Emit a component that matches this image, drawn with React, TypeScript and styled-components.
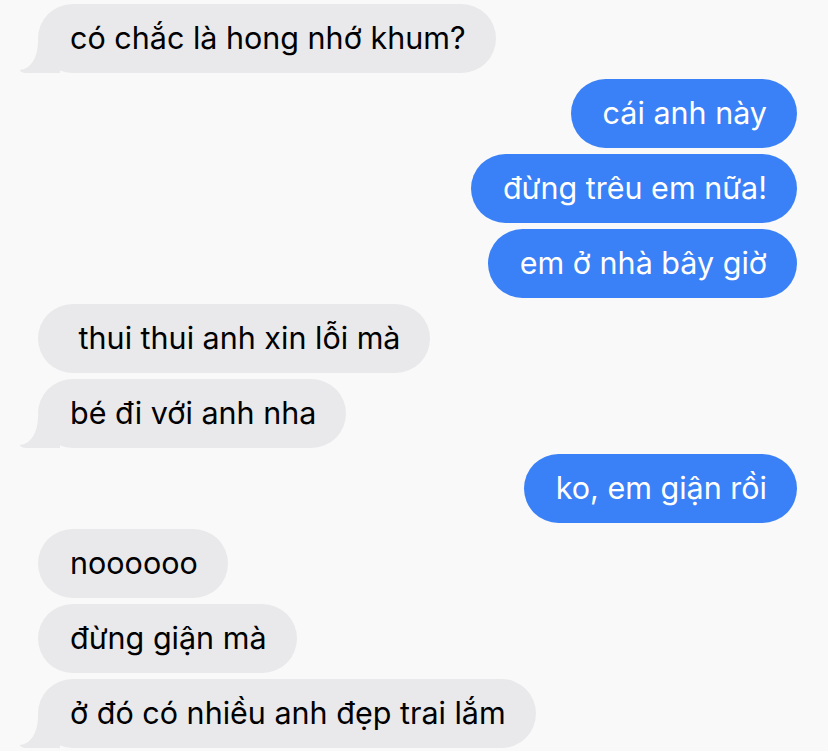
import styled, { createGlobalStyle } from 'styled-components'

const PAGE_BG = '#f9f9f9'
const GRAY = '#e9e9eb'
const BLUE = '#3a80f6'

interface Message {
  text: string
  mine: boolean
  tail?: boolean
}

const messages: Message[] = [
  { text: 'có chắc là hong nhớ khum?', mine: false, tail: true },
  { text: 'cái anh này', mine: true },
  { text: 'đừng trêu em nữa!', mine: true },
  { text: 'em ở nhà bây giờ', mine: true },
  { text: '\u00a0thui thui anh xin lỗi mà', mine: false },
  { text: 'bé đi với anh nha', mine: false, tail: true },
  { text: 'ko, em giận rồi', mine: true },
  { text: 'noooooo', mine: false },
  { text: 'đừng giận mà', mine: false },
  { text: 'ở đó có nhiều anh đẹp trai lắm', mine: false, tail: true },
]

export default function App() {
  return (
    <>
      <GlobalStyle />
      <ThreadStyled>
        {messages.map((m, i) => (
          <RowStyled key={i} mine={m.mine}>
            <BubbleStyled mine={m.mine} tail={!!m.tail}>
              {m.text}
            </BubbleStyled>
          </RowStyled>
        ))}
      </ThreadStyled>
    </>
  )
}

const GlobalStyle = createGlobalStyle`
  html, body {
    margin: 0;
    padding: 0;
    background: ${PAGE_BG};
  }
  body {
    font-family: Inter, "Noto Sans", "Liberation Sans", sans-serif;
    -webkit-font-smoothing: antialiased;
  }
`

const ThreadStyled = styled('div')`
  display: flex;
  flex-direction: column;
  gap: 6px;
  padding: 4px 31px 0 38px;
  width: 828px;
  height: 751px;
  box-sizing: border-box;
  overflow: hidden;
`

const RowStyled = styled('div')<{ mine: boolean }>`
  display: flex;
  justify-content: ${(props) => (props.mine ? 'flex-end' : 'flex-start')};
`

const BubbleStyled = styled('div')<{ mine: boolean; tail: boolean }>`
  position: relative;
  height: 69px;
  box-sizing: border-box;
  display: flex;
  align-items: center;
  padding: 0 30px 2px 32px;
  border-radius: 35px;
  font-size: 30.5px;
  white-space: pre;
  background: ${(props) => (props.mine ? BLUE : GRAY)};
  color: ${(props) => (props.mine ? '#fff' : '#000')};

  &::before {
    content: '';
    display: ${(props) => (props.tail ? 'block' : 'none')};
    position: absolute;
    bottom: 0;
    left: -18px;
    width: 40px;
    height: 32px;
    background: ${GRAY};
    border-bottom-left-radius: 6px 3px;
  }

  &::after {
    content: '';
    display: ${(props) => (props.tail ? 'block' : 'none')};
    position: absolute;
    bottom: 3px;
    left: -40px;
    width: 40px;
    height: 34px;
    background: ${PAGE_BG};
    border-bottom-right-radius: 18px 28px;
  }
`
